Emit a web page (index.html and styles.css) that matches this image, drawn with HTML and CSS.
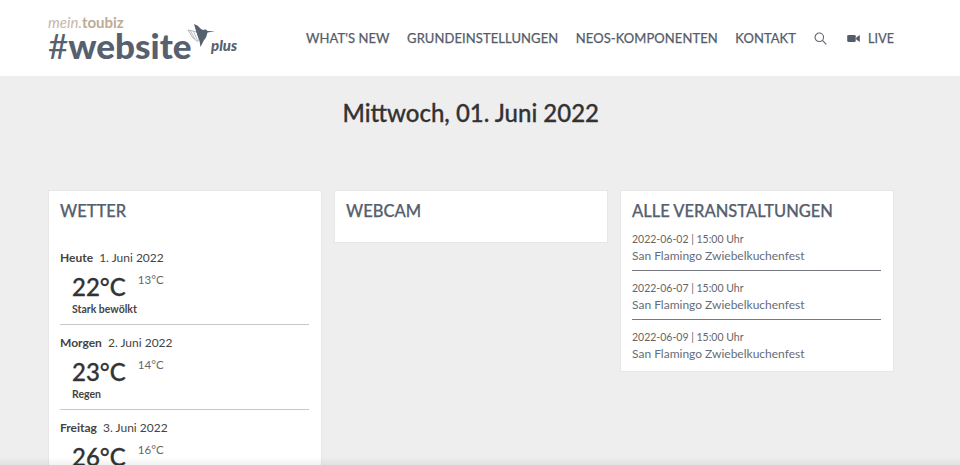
FILE: index.html
```html
<!DOCTYPE html>
<html lang="de">
<head>
<meta charset="utf-8">
<title>Mittwoch, 01. Juni 2022</title>
<link rel="stylesheet" href="styles.css">
</head>
<body>
<header class="header">
  <a class="logo">
    <span class="logo-top">mein.<b>toubiz</b></span>
    <span class="logo-main">#<b>website</b></span>
    <svg class="logo-bird" width="35" height="32" viewBox="0 0 35 32">
      <path d="M3 10 L12 12 L14.5 19 L12.5 21.5 L8 18 Z" fill="#fff" stroke="#9aa1aa" stroke-width=".8"/>
      <path d="M5.5 11 L10 19 M8.5 11.5 L12.5 20.5" stroke="#9aa1aa" stroke-width=".7" fill="none"/>
      <path d="M9 4 Q13 5 16 9 L18 10 Q21 8.8 22.5 11 L30 11.3 L22.5 12.5 Q22 17 18.5 21 L15.5 27 L14.5 21 Q12 15 9 4 Z" fill="#56606f"/>
    </svg>
    <span class="logo-plus">plus</span>
  </a>
  <nav class="nav">
    <a>WHAT'S NEW</a>
    <a>GRUNDEINSTELLUNGEN</a>
    <a>NEOS-KOMPONENTEN</a>
    <a>KONTAKT</a>
    <svg class="icon-search" width="13" height="13" viewBox="0 0 14 14" fill="none" stroke="#5c6370" stroke-width="1.2">
      <circle cx="5.7" cy="5.7" r="4.6"/><path d="M9.1 9.1 L13.3 13.3"/>
    </svg>
    <span class="live">
      <svg width="13" height="9" viewBox="0 0 14 10" fill="#555c69">
        <rect x="0" y="1" width="9.5" height="8" rx="1.5"/><path d="M10 4 L14 1.2 V8.8 L10 6 Z"/>
      </svg>
      LIVE
    </span>
  </nav>
</header>
<main class="main">
  <h1 class="title">Mittwoch, 01. Juni 2022</h1>
  <div class="columns">
    <section class="card">
      <h2 class="card-title">WETTER</h2>
      <div class="weather-list">
        <div class="day">
          <div class="day-head"><b>Heute</b> 1. Juni 2022</div>
          <div class="temps"><span class="max">22°C</span><span class="min">13°C</span></div>
          <div class="desc">Stark bewölkt</div>
        </div>
        <div class="day">
          <div class="day-head"><b>Morgen</b> 2. Juni 2022</div>
          <div class="temps"><span class="max">23°C</span><span class="min">14°C</span></div>
          <div class="desc">Regen</div>
        </div>
        <div class="day">
          <div class="day-head"><b>Freitag</b> 3. Juni 2022</div>
          <div class="temps"><span class="max">26°C</span><span class="min">16°C</span></div>
        </div>
      </div>
    </section>
    <section class="card card-webcam">
      <h2 class="card-title">WEBCAM</h2>
    </section>
    <section class="card card-events">
      <h2 class="card-title">ALLE VERANSTALTUNGEN</h2>
      <div class="event-list">
        <div class="event"><div class="event-date">2022-06-02 | 15:00 Uhr</div><div class="event-name">San Flamingo Zwiebelkuchenfest</div></div>
        <div class="event"><div class="event-date">2022-06-07 | 15:00 Uhr</div><div class="event-name">San Flamingo Zwiebelkuchenfest</div></div>
        <div class="event"><div class="event-date">2022-06-09 | 15:00 Uhr</div><div class="event-name">San Flamingo Zwiebelkuchenfest</div></div>
      </div>
    </section>
  </div>
</main>
<div class="bottom-shade"></div>
</body>
</html>
```
FILE: styles.css
```css
* { box-sizing: border-box; }
html, body { margin: 0; height: 465px; overflow: hidden; }
body { background: #eeeeee; font-family: Lato, sans-serif; color: #333; }

.header {
  height: 76px;
  background: #fff;
  display: flex;
  justify-content: space-between;
  align-items: center;
  padding: 0 66px 0 48px;
}
.logo { position: relative; display: block; width: 195px; height: 62px; }
.logo-top { position: absolute; left: 0; top: 6px; font-size: 15px; font-style: italic; color: #c4b8a9; line-height: 18px; white-space: nowrap; }
.logo-top b { font-style: normal; font-weight: 700; color: #bcab97; }
.logo-main { position: absolute; left: 0; top: 25px; font-size: 35px; line-height: 27px; color: #56606f; white-space: nowrap; }
.logo-main b { font-weight: 900; }
.logo-bird { position: absolute; left: 137px; top: 13px; }
.logo-plus { position: absolute; left: 163px; top: 30px; font-size: 15px; font-weight: 900; font-style: italic; color: #56606f; line-height: 17px; }

.nav { display: flex; align-items: center; gap: 17.5px; font-size: 13px; letter-spacing: .08px; color: #555c69; -webkit-text-stroke: .25px #555c69; }
.icon-search { margin-left: .5px; }
.live { display: flex; align-items: center; gap: 8px; margin-left: 2.5px; font-size: 12.5px; }

.main { padding: 0 66.5px 0 48px; }
.title { margin: 22px 0 0; text-align: center; font-size: 24px; font-weight: 500; line-height: 30px; color: #333; -webkit-text-stroke: .3px #333; }
.columns { display: flex; align-items: flex-start; gap: 12.5px; margin-top: 62px; }
.card { flex: 1 1 0; min-width: 0; background: #fff; border: 1px solid #e6e6e6; padding: 10px 12px 0 11px; }
.card-title { margin: 0; font-size: 16.5px; font-weight: 500; line-height: 20px; color: #565f6e; -webkit-text-stroke: .25px #565f6e; white-space: nowrap; }
.card-webcam { height: 53px; }
.card-events { padding-bottom: 9px; }

.weather-list { margin-top: 19px; }
.day { height: 85px; padding-top: 10px; border-bottom: 1px solid #c8c8c8; }
.day:last-child { border-bottom: 0; }
.day-head { font-size: 12px; line-height: 16px; color: #444; }
.day-head b { font-weight: 700; margin-right: 3px; }
.temps { display: flex; align-items: flex-start; padding: 6px 0 0 12px; }
.max { font-size: 24px; font-weight: 500; line-height: 30px; color: #333; -webkit-text-stroke: .3px #333; }
.min { font-size: 11.5px; line-height: 16px; margin-left: 12px; color: #666; }
.desc { margin-top: 1px; padding-left: 12px; font-size: 10.5px; font-weight: 700; line-height: 13px; color: #444; }

.event-list { margin-top: 1px; }
.event { border-bottom: 1px solid #77777f; padding: 10px 0 6px; }
.event:last-child { border-bottom: 0; padding-bottom: 0; }
.event-date { font-size: 10.5px; line-height: 14px; color: #666; }
.event-name { font-size: 12px; line-height: 16px; margin-top: 2px; color: #656d7a; }

.bottom-shade {
  position: fixed;
  left: 0;
  right: 0;
  bottom: 0;
  height: 8px;
  background: linear-gradient(to bottom, rgba(0,0,0,0), rgba(0,0,0,.05));
}
```
